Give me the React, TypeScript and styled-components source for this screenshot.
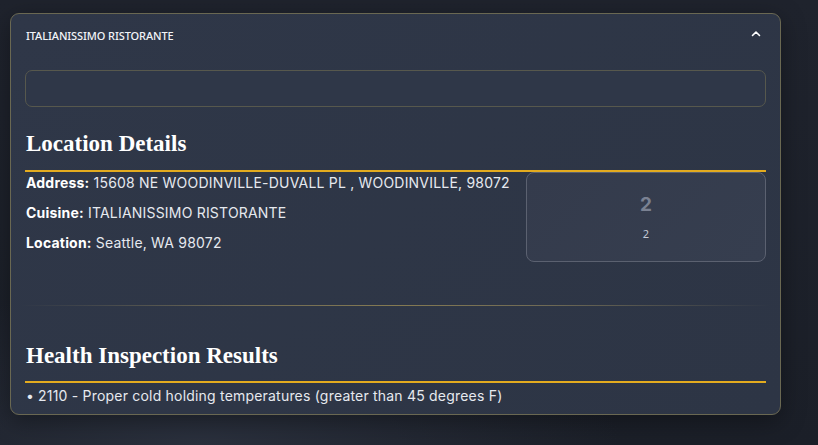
import React from "react";
import styled, { createGlobalStyle } from "styled-components";

const Global = createGlobalStyle`
  html, body { margin: 0; padding: 0; }
  body {
    width: 818px;
    height: 445px;
    overflow: hidden;
    background:
      radial-gradient(ellipse 420px 160px at 200px 445px, #2a303d 0%, rgba(42,48,61,0) 100%),
      linear-gradient(180deg, #1f232d 0%, #1b1f28 100%);
    font-family: "Inter", "Liberation Sans", sans-serif;
  }
`;

const Page = styled.div`
  padding: 13px 0 0 10px;
`;

const Card = styled.section`
  width: 771px;
  box-sizing: border-box;
  border: 1px solid #6a6852;
  border-radius: 9px;
  background: linear-gradient(135deg, #2f3748 0%, #2d3545 100%);
  box-shadow: 0 6px 24px rgba(0, 0, 0, 0.35);
  padding: 0 14px 8px 14px;
`;

const Header = styled.div`
  height: 42px;
  display: flex;
  align-items: center;
  justify-content: space-between;
  padding: 0 1px;
`;

const HeaderTitle = styled.span`
  font-family: "Noto Sans", "Open Sans", sans-serif;
  font-size: 11px;
  font-weight: 500;
  color: #f2f4f8;
  letter-spacing: -0.1px;
`;

const Chevron = styled.svg`
  width: 10px;
  height: 10px;
  margin-right: 4px;
  margin-top: -2px;
`;

const EmptyBox = styled.div`
  margin-top: 14px;
  height: 37px;
  box-sizing: border-box;
  border: 1px solid #57584d;
  border-radius: 7px;
  background: #2f3748;
`;

const SectionHeading = styled.h2<{ $top: number; $pad: number }>`
  margin: ${(p) => p.$top}px 0 0 0;
  padding: 0 1px ${(p) => p.$pad}px;
  font-family: "Liberation Serif", "Times New Roman", serif;
  font-weight: 700;
  font-size: 23px;
  line-height: 30px;
  color: #ffffff;
  border-bottom: 2px solid #e3ab1f;
`;

const DetailsRow = styled.div`
  display: grid;
  grid-template-columns: 1fr 240px;
  column-gap: 16px;
  align-items: start;
`;

const InfoList = styled.div`
  display: flex;
  flex-direction: column;
  gap: 10px;
  padding-top: 1px;
`;

const InfoLine = styled.p`
  margin: 0;
  font-size: 14px;
  letter-spacing: 0.2px;
  line-height: 20px;
  color: #e6e9ef;
  padding-left: 1px;
`;

const Label = styled.strong`
  font-weight: 700;
  color: #ffffff;
`;

const StatBox = styled.div`
  height: 90px;
  box-sizing: border-box;
  border: 1px solid #5b6170;
  border-radius: 8px;
  background: linear-gradient(135deg, #343b4c 0%, #363e4f 100%);
  display: flex;
  flex-direction: column;
  align-items: center;
  justify-content: center;
  gap: 11px;
  padding-top: 1px;
`;

const StatValue = styled.div`
  font-size: 19px;
  font-weight: 700;
  color: #7a8192;
  line-height: 22px;
`;

const StatCaption = styled.div`
  font-family: "Noto Sans", "Open Sans", sans-serif;
  font-size: 11px;
  color: #c4cad6;
  line-height: 14px;
`;

const Divider = styled.div`
  margin: 43px -5px 0;
  height: 1px;
  background: linear-gradient(90deg, rgba(138,124,74,0) 0%, #6f6a55 30%, #857a52 50%, #6f6a55 70%, rgba(138,124,74,0) 100%);
`;

const InspectionList = styled.ul`
  margin: 0;
  padding: 3px 0 0 1px;
  list-style: none;
`;

const InspectionItem = styled.li`
  font-size: 14px;
  letter-spacing: 0.2px;
  line-height: 20px;
  color: #e6e9ef;
  &::before {
    content: "•";
    margin-right: 4px;
  }
`;

export default function App() {
  return (
    <>
      <Global />
      <Page>
        <Card>
          <Header>
            <HeaderTitle>ITALIANISSIMO RISTORANTE</HeaderTitle>
            <Chevron viewBox="0 0 10 10">
              <polyline points="1.5,6.5 5,3 8.5,6.5" fill="none" stroke="#ffffff" strokeWidth="1.6" strokeLinecap="round" strokeLinejoin="round" />
            </Chevron>
          </Header>
          <EmptyBox />
          <SectionHeading $top={22} $pad={11}>Location Details</SectionHeading>
          <DetailsRow>
            <InfoList>
              <InfoLine>
                <Label>Address:</Label> 15608 NE WOODINVILLE-DUVALL PL , WOODINVILLE, 98072
              </InfoLine>
              <InfoLine>
                <Label>Cuisine:</Label> ITALIANISSIMO RISTORANTE
              </InfoLine>
              <InfoLine>
                <Label>Location:</Label> Seattle, WA 98072
              </InfoLine>
            </InfoList>
            <StatBox>
              <StatValue>2</StatValue>
              <StatCaption>2</StatCaption>
            </StatBox>
          </DetailsRow>
          <Divider />
          <SectionHeading $top={35} $pad={10}>Health Inspection Results</SectionHeading>
          <InspectionList>
            <InspectionItem>2110 - Proper cold holding temperatures (greater than 45 degrees F)</InspectionItem>
          </InspectionList>
        </Card>
      </Page>
    </>
  );
}
